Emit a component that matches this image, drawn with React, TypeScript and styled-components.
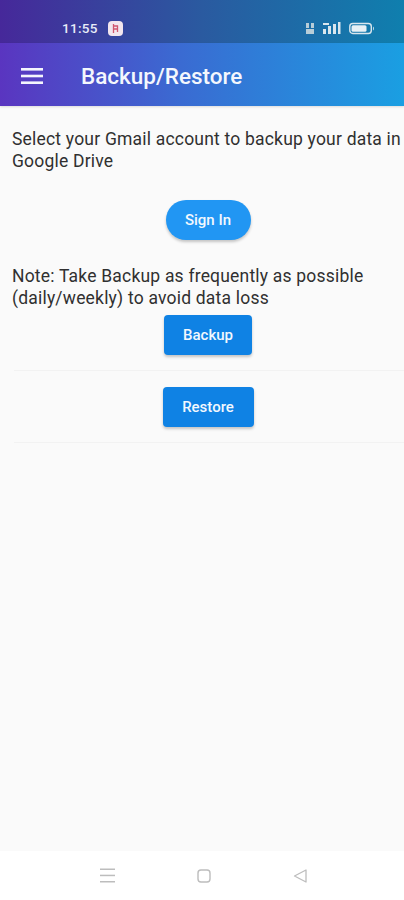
import React from "react";
import styled, { createGlobalStyle } from "styled-components";

const GlobalStyle = createGlobalStyle`
  html, body {
    margin: 0;
    padding: 0;
    background: #fafafa;
  }
  * {
    box-sizing: border-box;
  }
`;

const Screen = styled.div`
  width: 404px;
  height: 900px;
  display: flex;
  flex-direction: column;
  overflow: hidden;
  font-family: Roboto, "Liberation Sans", sans-serif;
  background: #fafafa;
`;

const StatusBar = styled.div`
  height: 43px;
  flex: none;
  display: flex;
  align-items: center;
  padding: 13px 29px 0 62px;
  background: linear-gradient(90deg, #46289a 0%, #2a5aa0 50%, #0f7fae 100%);
`;

const Clock = styled.span`
  font-size: 13.5px;
  font-weight: 500;
  letter-spacing: 0.3px;
  color: #e8ecf8;
`;

const NotifyBadge = styled.div`
  width: 15px;
  height: 15px;
  margin-left: 10px;
  border-radius: 4px;
  background: #f3e6ee;
  display: flex;
  align-items: center;
  justify-content: center;
`;

const StatusIcons = styled.div`
  margin-left: auto;
  display: flex;
  align-items: center;
  gap: 8px;
`;

const AppBar = styled.header`
  height: 63px;
  flex: none;
  display: flex;
  align-items: center;
  padding: 2px 0 0 21px;
  background: linear-gradient(90deg, #5a35c0 0%, #3a6bd2 45%, #1a9fe2 100%);
  box-shadow: 0 1px 2px rgba(0, 0, 0, 0.12);
`;

const Title = styled.h1`
  margin: 0 0 0 38px;
  font-size: 22.5px;
  font-weight: 500;
  color: #f4f7fd;
`;

const Content = styled.main`
  flex: 1;
  display: flex;
  flex-direction: column;
  padding-top: 22px;
`;

const Message = styled.p`
  margin: 0;
  padding-left: 12px;
  font-size: 17.5px;
  line-height: 22px;
  letter-spacing: 0.2px;
  color: #303030;
  white-space: nowrap;
`;

const ButtonRow = styled.div<{ $top: number; $bottom: number; $divider?: boolean }>`
  display: flex;
  justify-content: center;
  margin-left: 14px;
  padding: ${(p) => p.$top}px 2px ${(p) => p.$bottom}px 0;
  border-bottom: ${(p) => (p.$divider ? "1px solid #f2f2f2" : "none")};
`;

const ActionButton = styled.button<{ $width: number; $round?: boolean }>`
  width: ${(p) => p.$width}px;
  height: 40px;
  padding: 0;
  border: none;
  border-radius: ${(p) => (p.$round ? "20px" : "4px")};
  background: ${(p) => (p.$round ? "#2196f3" : "#0f82e4")};
  color: #f2f8fe;
  font-family: inherit;
  font-size: 15px;
  font-weight: 500;
  box-shadow: 0 2px 3px rgba(0, 0, 0, 0.22);
`;

const NavBar = styled.nav`
  height: 49px;
  flex: none;
  display: flex;
  align-items: center;
  justify-content: space-between;
  padding: 0 97px 0 100px;
  background: #ffffff;
`;

const BatteryAndSignal = () => (
  <>
    <svg width="10" height="13" viewBox="0 0 10 13" fill="none">
      <path d="M1 1h3v5H1zM6 1h3v5H6zM1 7h8v5H1z" fill="#b8cdd8" />
    </svg>
    <svg width="18" height="13" viewBox="0 0 18 13" fill="#d9e6ee">
      <rect x="0" y="7" width="3" height="5" />
      <rect x="5" y="4" width="3" height="8" />
      <rect x="10" y="2" width="3" height="10" />
      <rect x="15" y="0" width="2.5" height="12" />
      <rect x="0" y="1" width="6" height="2" />
    </svg>
    <svg width="26" height="13" viewBox="0 0 26 13" fill="none">
      <rect x="0.8" y="1.5" width="21.5" height="10" rx="3" stroke="#d9e6ee" strokeWidth="1.4" />
      <rect x="2.5" y="3.2" width="15" height="6.6" rx="1.5" fill="#e8f1f6" />
      <path d="M24 4.5c1.2.6 1.2 3.4 0 4z" fill="#d9e6ee" />
    </svg>
  </>
);

export default function App() {
  return (
    <Screen>
      <GlobalStyle />
      <StatusBar>
        <Clock>11:55</Clock>
        <NotifyBadge>
          <svg width="9" height="11" viewBox="0 0 9 11" fill="none" stroke="#d0566f" strokeWidth="1.3">
            <path d="M2.5 1v9M2.5 3h4v3h-4M6.5 6v3" />
          </svg>
        </NotifyBadge>
        <StatusIcons>
          <BatteryAndSignal />
        </StatusIcons>
      </StatusBar>
      <AppBar>
        <svg width="22" height="16" viewBox="0 0 22 16" fill="#f4f5fd">
          <rect x="0" y="0" width="22" height="2.6" />
          <rect x="0" y="6.7" width="22" height="2.6" />
          <rect x="0" y="13.4" width="22" height="2.6" />
        </svg>
        <Title>Backup/Restore</Title>
      </AppBar>
      <Content>
        <Message>
          Select your Gmail account to backup your data in
          <br />
          Google Drive
        </Message>
        <ButtonRow $top={28} $bottom={25}>
          <ActionButton $width={85} $round>Sign In</ActionButton>
        </ButtonRow>
        <Message>
          Note: Take Backup as frequently as possible
          <br />
          (daily/weekly) to avoid data loss
        </Message>
        <ButtonRow $top={6} $bottom={15} $divider>
          <ActionButton $width={88}>Backup</ActionButton>
        </ButtonRow>
        <ButtonRow $top={16} $bottom={15} $divider>
          <ActionButton $width={91}>Restore</ActionButton>
        </ButtonRow>
      </Content>
      <NavBar>
        <svg width="15" height="15" viewBox="0 0 15 15" fill="#bdbdbd">
          <rect x="0" y="0.5" width="15" height="1.5" />
          <rect x="0" y="6.7" width="15" height="1.5" />
          <rect x="0" y="13" width="15" height="1.5" />
        </svg>
        <svg width="14" height="14" viewBox="0 0 14 14" fill="none" stroke="#bdbdbd" strokeWidth="1.4">
          <rect x="1" y="1" width="12" height="12" rx="3" />
        </svg>
        <svg width="14" height="14" viewBox="0 0 14 14" fill="none" stroke="#bdbdbd" strokeWidth="1.3">
          <path d="M13 1v12L1.5 7z" strokeLinejoin="round" />
        </svg>
      </NavBar>
    </Screen>
  );
}
